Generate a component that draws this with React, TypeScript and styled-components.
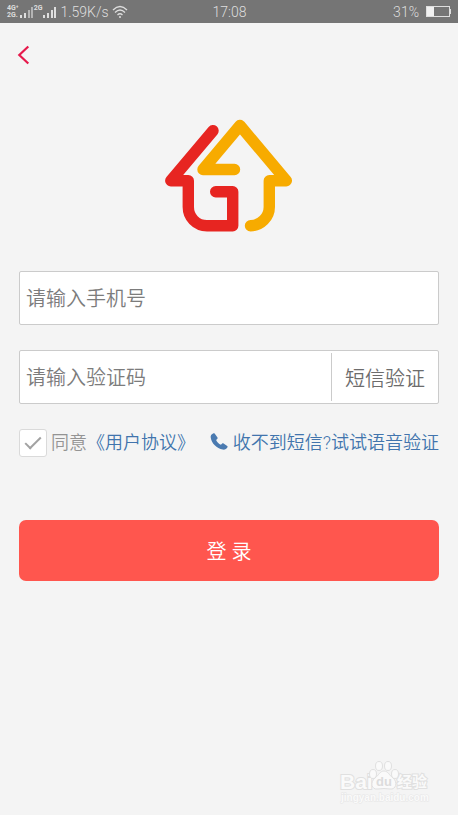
import React, { useState } from "react";
import styled, { createGlobalStyle } from "styled-components";

const GlobalStyle = createGlobalStyle`
  *, *::before, *::after { box-sizing: border-box; }
  html, body { margin: 0; background: #f4f4f4; }
  body, button, input {
    font-family: Roboto, "Noto Sans CJK SC", sans-serif;
    font-weight: 350;
  }
`;

const Screen = styled.div`
  display: flex;
  flex-direction: column;
  min-height: 100vh;
  background: #f4f4f4;
`;

const StatusBar = styled.header`
  display: grid;
  grid-template-columns: 1fr auto 1fr;
  align-items: center;
  height: 23px;
  padding: 0 6px 0 7px;
  background: #757575;
  color: #dedede;
  font-size: 14px;
  line-height: 24px;
`;

const StatusGroup = styled.div<{ $end?: boolean }>`
  display: flex;
  align-items: center;
  justify-content: ${(p) => (p.$end ? "flex-end" : "flex-start")};
  gap: ${(p) => (p.$end ? "7px" : "3px")};
`;

const Network = styled.div`
  display: flex;
  align-items: flex-start;
`;

const NetworkLabel = styled.div`
  font-size: 7px;
  font-weight: 700;
  line-height: 7px;
`;

const Nav = styled.nav`
  display: flex;
  padding: 20px 16px 0;
`;

const BackButton = styled.button`
  display: flex;
  padding: 0;
  border: 0;
  background: none;
  cursor: pointer;
`;

const Brand = styled.div`
  display: flex;
  justify-content: center;
  padding: 51px 2px 0 0;
`;

const Form = styled.form`
  display: flex;
  flex-direction: column;
  padding: 39px 19px 0;
`;

const Field = styled.div`
  display: flex;
  align-items: stretch;
  height: 54px;
  margin-bottom: 25px;
  padding: 2px 0;
  border: 1px solid #cbcbcb;
  border-radius: 2px;
  background: #fff;
`;

const TextInput = styled.input`
  flex: 1;
  min-width: 0;
  padding: 2px 6px 0;
  border: 0;
  outline: 0;
  background: none;
  color: #444;
  font-size: 20px;
  &::placeholder { color: #7c7c7c; opacity: 1; }
`;

const CodeButton = styled.button`
  padding: 0 13px;
  border: 0;
  border-left: 1px solid #cbcbcb;
  background: none;
  color: #6c6c6c;
  font-size: 20px;
  cursor: pointer;
`;

const Options = styled.div`
  display: flex;
  align-items: center;
  justify-content: space-between;
  font-size: 18px;
  line-height: 28px;
  white-space: nowrap;
`;

const Agreement = styled.div`
  display: flex;
  align-items: center;
`;

const AgreeLabel = styled.label`
  display: flex;
  align-items: center;
  gap: 4px;
  color: #949494;
  cursor: pointer;
`;

const Checkbox = styled.input`
  appearance: none;
  display: grid;
  place-items: center;
  width: 28px;
  height: 28px;
  margin: 0;
  border: 1px solid #dadada;
  border-radius: 3px;
  background: #fff;
  &:checked::before {
    content: "";
    width: 16px;
    height: 8px;
    border: solid #a2a2a2;
    border-width: 0 0 2px 2px;
    transform: translateY(-2px) rotate(-45deg);
  }
`;

const TextLink = styled.a`
  display: flex;
  align-items: center;
  gap: 5px;
  color: #4174ad;
  text-decoration: none;
`;

const LoginButton = styled.button`
  height: 61px;
  margin-top: 63px;
  border: 0;
  border-radius: 7px;
  background: #ff564e;
  color: #fff;
  font-size: 20px;
  cursor: pointer;
`;

const Footer = styled.footer`
  display: flex;
  justify-content: flex-end;
  margin-top: auto;
  padding: 0 26px 10px 0;
`;

const SignalBars = ({ solid }: { solid?: boolean }) => (
  <svg width="15" height="14" viewBox="0 0 15 14" fill="#dedede" aria-hidden="true">
    <rect x="1" y="10" width="2" height="3" />
    <rect x="5" y="8" width="2" height="5" />
    <rect x="9" y="5" width="2" height="8" opacity={solid ? 1 : 0.6} />
    <rect x="12" y="2" width="2" height="11" opacity={solid ? 1 : 0.6} />
  </svg>
);

const WifiIcon = () => (
  <svg width="16" height="14" viewBox="0 0 16 14" fill="none" stroke="#dedede" strokeWidth="1.3" aria-hidden="true">
    <path d="M1 5Q8-2 15 5M3 7.500Q8 2.500 13 7.500M5.500 10Q8 7.500 10.500 10" />
    <circle cx="8" cy="12" r="1" fill="#dedede" stroke="none" />
  </svg>
);

const BatteryIcon = () => (
  <svg width="26" height="12" viewBox="0 0 26 12" aria-hidden="true">
    <rect x="0.500" y="0.500" width="23" height="10" fill="none" stroke="#dedede" />
    <rect x="1" y="1" width="7" height="9" fill="#f0f0f0" />
    <rect x="24" y="3" width="1" height="5" fill="#dedede" />
  </svg>
);

const BackIcon = () => (
  <svg width="16" height="24" viewBox="0 0 16 24" fill="none" stroke="#e6194b" strokeWidth="2.200" aria-hidden="true">
    <path d="M12.300 3.500L3.300 12L12.300 20.500" />
  </svg>
);

const HouseLogo = () => (
  <svg width="128" height="114" viewBox="9 8 128 114" fill="none" strokeWidth="11.400" strokeLinecap="round" strokeLinejoin="round" role="img" aria-label="logo">
    <path stroke="#e72521" d="M58 20.700L15.800 70.700H33.300V97C33.300 107 41 115.700 52 115.700H77.700V81.800H60.700" />
    <path stroke="#f7ab00" d="M79.500 59.500H48L85 15.500L131.300 70.700H114.300V97C114.300 107 106 115.700 95.500 115.700" />
  </svg>
);

const PhoneIcon = () => (
  <svg width="18" height="20" viewBox="0 0 18 20" fill="#4a7ab0" aria-hidden="true">
    <path d="M4.800 .8L7.500 4.600C7.800 5.100 7.700 5.600 7.200 6L6.100 6.900C7 8.900 8.700 10.700 10.900 11.700L12 10.700C12.500 10.200 13 10.100 13.600 10.500L17.200 12.900C17.700 13.200 17.800 13.800 17.500 14.300C16.500 16 14.800 16.900 12.800 16.600C6.700 15.500 1.600 10.400 .7 4.500C.4 2.600 1.400 1.200 3.100 .5C3.800 .2 4.400 .3 4.800 .8Z" />
  </svg>
);

const Watermark = () => (
  <svg width="94" height="46" viewBox="0 0 94 46" role="img" aria-label="Baidu 经验" fill="#fafafa" stroke="#e0e0e0">
    <g fontFamily='"Liberation Sans", "Noto Sans CJK SC", sans-serif' fontWeight="700" paintOrder="stroke">
      <text x="2" y="30" fontSize="21" strokeWidth="2">Bai</text>
      <text x="59" y="28" fontSize="15" strokeWidth="2">经验</text>
      <text x="3" y="42" fontSize="10" strokeWidth="1" stroke="#e6e6e6">jingyan.baidu.com</text>
    </g>
    <ellipse cx="35" cy="15" rx="3.500" ry="4.500" />
    <ellipse cx="41" cy="7" rx="3.500" ry="4.500" />
    <ellipse cx="50" cy="7" rx="3.500" ry="4.500" />
    <ellipse cx="57" cy="15" rx="3.500" ry="4.500" />
    <path d="M46 12C50 12 51 16 55 19C60 23 58 31 52 30Q46 29 40 30C33 31 32 23 37 19C41 16 42 12 46 12Z" />
    <text x="38" y="27" fontSize="13" fontWeight="700" fontFamily='"Liberation Sans", sans-serif' fill="#dcdcdc" stroke="none">du</text>
  </svg>
);

export default function App() {
  const [agreed, setAgreed] = useState(true);
  return (
    <Screen>
      <GlobalStyle />
      <StatusBar>
        <StatusGroup>
          <Network>
            <NetworkLabel>4G⁺<br />2G.</NetworkLabel>
            <SignalBars />
            <NetworkLabel>2G</NetworkLabel>
            <SignalBars solid />
          </Network>
          <span>1.59K/s</span>
          <WifiIcon />
        </StatusGroup>
        <span>17:08</span>
        <StatusGroup $end>
          <span>31%</span>
          <BatteryIcon />
        </StatusGroup>
      </StatusBar>
      <Nav>
        <BackButton type="button" aria-label="返回"><BackIcon /></BackButton>
      </Nav>
      <main>
        <Brand><HouseLogo /></Brand>
        <Form onSubmit={(e) => e.preventDefault()}>
          <Field>
            <TextInput type="tel" aria-label="手机号" placeholder="请输入手机号" />
          </Field>
          <Field>
            <TextInput type="text" inputMode="numeric" aria-label="验证码" placeholder="请输入验证码" />
            <CodeButton type="button">短信验证</CodeButton>
          </Field>
          <Options>
            <Agreement>
              <AgreeLabel>
                <Checkbox type="checkbox" checked={agreed} onChange={(e) => setAgreed(e.target.checked)} />
                同意
              </AgreeLabel>
              <TextLink href="#agreement">《用户协议》</TextLink>
            </Agreement>
            <TextLink href="#voice"><PhoneIcon />收不到短信?试试语音验证</TextLink>
          </Options>
          <LoginButton type="submit">登 录</LoginButton>
        </Form>
      </main>
      <Footer><Watermark /></Footer>
    </Screen>
  );
}
